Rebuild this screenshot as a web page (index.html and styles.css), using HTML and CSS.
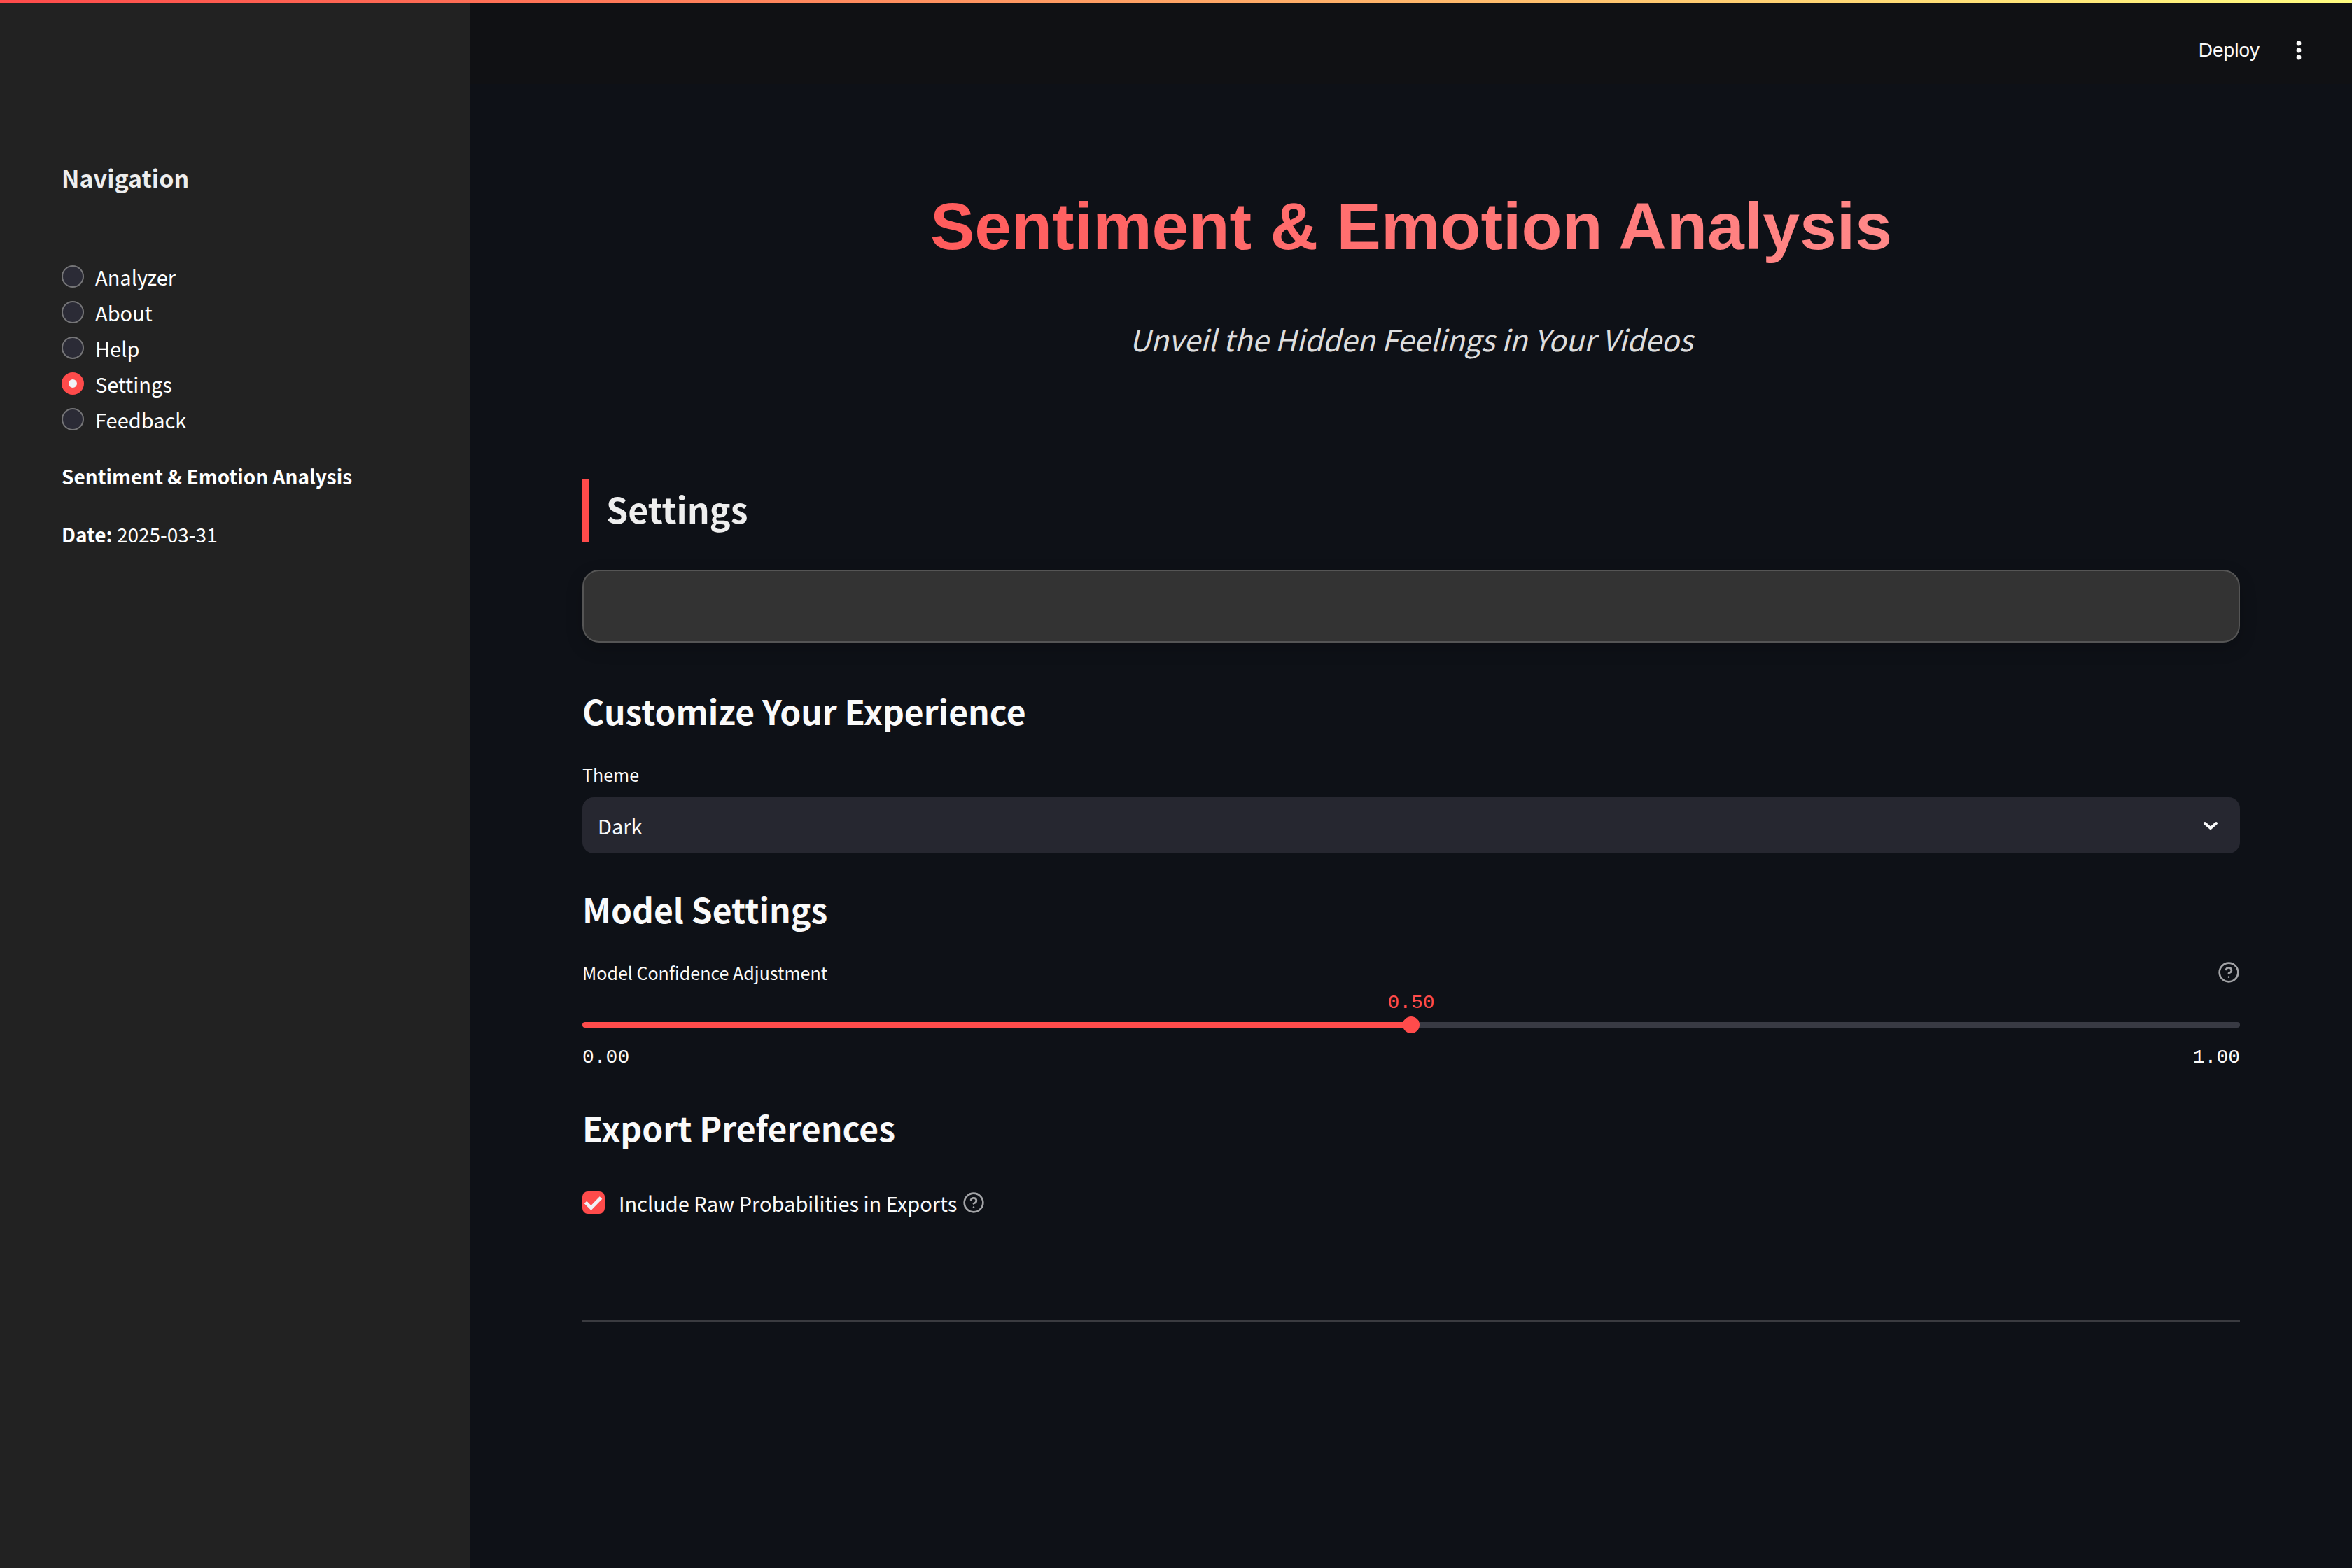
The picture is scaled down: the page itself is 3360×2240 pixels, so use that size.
FILE: index.html
```html
<!DOCTYPE html>
<html lang="en">
<head>
<meta charset="utf-8">
<title>Sentiment &amp; Emotion Analysis</title>
<link rel="stylesheet" href="styles.css">
</head>
<body>
<div class="accent-line"></div>
<div class="app">
  <aside class="sidebar">
    <h2 class="sidebar-title">Navigation</h2>
    <nav class="nav" aria-label="Navigation">
      <label class="nav-item"><input type="radio" name="page" class="radio">Analyzer</label>
      <label class="nav-item"><input type="radio" name="page" class="radio">About</label>
      <label class="nav-item"><input type="radio" name="page" class="radio">Help</label>
      <label class="nav-item"><input type="radio" name="page" class="radio" checked>Settings</label>
      <label class="nav-item"><input type="radio" name="page" class="radio">Feedback</label>
    </nav>
    <p class="sidebar-text"><strong>Sentiment &amp; Emotion Analysis</strong></p>
    <p class="sidebar-text"><strong>Date:</strong> 2025-03-31</p>
  </aside>
  <div class="page">
    <header class="toolbar">
      <button type="button" class="deploy">Deploy</button>
      <button type="button" class="menu" aria-label="Main menu">
        <svg class="menu-icon" viewBox="0 0 8 28"><circle cx="4" cy="4" r="3.4"/><circle cx="4" cy="14" r="3.4"/><circle cx="4" cy="24" r="3.4"/></svg>
      </button>
    </header>
    <main class="content">
      <h1 class="title">Sentiment &amp; Emotion Analysis</h1>
      <p class="subtitle">Unveil the Hidden Feelings in Your Videos</p>
      <h2 class="section-title">Settings</h2>
      <div class="card"></div>

      <h3 class="heading">Customize Your Experience</h3>
      <label class="field-label" for="theme">Theme</label>
      <div class="select-box">
        <select id="theme" class="select"><option>Dark</option><option>Light</option></select>
        <svg class="chevron" viewBox="0 0 32 32"><path d="M8 13l8 7 8-7"/></svg>
      </div>

      <h3 class="heading">Model Settings</h3>
      <div class="label-row">
        <label class="field-label" for="confidence">Model Confidence Adjustment</label>
        <button type="button" class="help" aria-label="Help for model confidence">
          <svg class="help-icon" viewBox="0 0 24 24"><circle cx="12" cy="12" r="10"/><path d="M9.09 9a3 3 0 0 1 5.83 1c0 2-3 3-3 3"/><path d="M12 17h.01"/></svg>
        </button>
      </div>
      <div class="slider">
        <output class="slider-value" for="confidence">0.50</output>
        <input type="range" id="confidence" class="range" min="0" max="1" step="0.01" value="0.5">
        <div class="ticks"><span>0.00</span><span>1.00</span></div>
      </div>

      <h3 class="heading">Export Preferences</h3>
      <div class="check-row">
        <label class="check-label">
          <span class="check-box">
            <input type="checkbox" class="check" checked>
            <svg class="check-mark" viewBox="0 0 32 32"><path d="M4.500 15.500l8 8L26.500 9"/></svg>
          </span>
          Include Raw Probabilities in Exports
        </label>
        <button type="button" class="help" aria-label="Help for raw probabilities">
          <svg class="help-icon" viewBox="0 0 24 24"><circle cx="12" cy="12" r="10"/><path d="M9.09 9a3 3 0 0 1 5.83 1c0 2-3 3-3 3"/><path d="M12 17h.01"/></svg>
        </button>
      </div>
      <hr class="rule">
    </main>
  </div>
</div>
</body>
</html>
```
FILE: styles.css
```css
* { box-sizing: border-box; }

body {
  margin: 0;
  background: #0e1117;
  color: #fafafa;
  font-family: "Noto Sans CJK JP", "Noto Sans", sans-serif;
  font-size: 29px;
  line-height: 48px;
}

h1, h2, h3, p { margin: 0; }
button { padding: 0; border: 0; background: none; color: inherit; }

.accent-line {
  position: absolute;
  inset: 0 0 auto 0;
  height: 4px;
  background: linear-gradient(90deg, #ff4b4b, #fffd80);
}

.app { display: flex; min-height: 100vh; }

/* Sidebar */
.sidebar {
  flex: none;
  width: 20%;
  padding: 226px 88px 0;
  background: #222;
  color: #fff;
}
.sidebar-title {
  margin-bottom: 89px;
  color: #eee;
  font-size: 34px;
  font-weight: 700;
  line-height: 56px;
}
.nav { display: flex; flex-direction: column; gap: 3px; margin-bottom: 33px; }
.nav-item { display: flex; align-items: center; gap: 16px; }
.radio {
  appearance: none;
  flex: none;
  width: 32px;
  height: 32px;
  margin: 0;
  border: 2px solid #767678;
  border-radius: 50%;
  background: #2b2b36;
}
.radio:checked { border: 10px solid #ff4b4b; background: #f0f2f6; }
.sidebar-text { margin-bottom: 35px; font-size: 28px; }

/* Main column */
.page { flex: 1; min-width: 0; }
.toolbar {
  display: flex;
  justify-content: flex-end;
  align-items: center;
  gap: 52px;
  height: 120px;
  padding: 24px 72px 0 0;
  background: #101114;
}
.deploy {
  font-family: "Liberation Sans", Arial, sans-serif;
  font-size: 28px;
  line-height: 48px;
}
.menu { display: flex; }
.menu-icon { width: 8px; height: 28px; fill: #fafafa; }

.content { display: flex; flex-direction: column; padding: 143px 160px 80px; }
.title {
  background: linear-gradient(90deg, #ff4b4b, #ff9999);
  background-clip: text;
  color: transparent;
  font-family: "Liberation Sans", Arial, sans-serif;
  font-size: 95px;
  line-height: 120px;
  text-align: center;
}
.subtitle {
  margin: 65px 0 164px;
  color: #ddd;
  font-size: 42px;
  font-style: italic;
  line-height: 72px;
  text-align: center;
}
.section-title {
  padding: 0 0 6px 24px;
  border-left: 10px solid #ff4b4b;
  color: #eee;
  font-size: 50px;
  line-height: 84px;
}
.card {
  height: 104px;
  margin: 40px 0 61px;
  border: 2px solid #555;
  border-radius: 24px;
  background: #333;
  box-shadow: 0 8px 24px rgba(0, 0, 0, .2);
}
.heading { font-size: 48px; font-weight: 700; line-height: 72px; }
.field-label { font-size: 25px; line-height: 40px; }

.select-box { display: grid; align-items: center; }
.select-box > * { grid-area: 1 / 1; }
.select {
  appearance: none;
  width: 100%;
  height: 80px;
  padding: 0 22px;
  border: 0;
  border-radius: 16px;
  background: #262730;
  color: #fafafa;
  font: inherit;
}
.chevron {
  justify-self: end;
  width: 32px;
  height: 32px;
  margin-right: 26px;
  fill: none;
  stroke: #fafafa;
  stroke-width: 4;
  stroke-linecap: round;
  stroke-linejoin: round;
  pointer-events: none;
}

.label-row { display: flex; justify-content: space-between; align-items: center; }
.help { display: flex; }
.help-icon {
  width: 32px;
  height: 32px;
  fill: none;
  stroke: #a3a4a7;
  stroke-width: 2;
  stroke-linecap: round;
  stroke-linejoin: round;
}

.slider {
  display: flex;
  flex-direction: column;
  margin-top: 5px;
  font-family: "Liberation Mono", "Courier New", monospace;
  font-size: 28px;
  line-height: 40px;
}
.slider-value { color: #ff4b4b; line-height: 38px; text-align: center; }
.range {
  appearance: none;
  width: 100%;
  height: 24px;
  margin: 0 0 15px;
  background: none;
}
.range::-webkit-slider-runnable-track {
  height: 8px;
  border-radius: 4px;
  background: linear-gradient(90deg, #ff4b4b 50%, #383a43 50%);
}
.range::-webkit-slider-thumb {
  appearance: none;
  width: 24px;
  height: 24px;
  margin-top: -8px;
  border-radius: 50%;
  background: #ff4b4b;
}
.ticks { display: flex; justify-content: space-between; }

.check-row { display: flex; align-items: center; gap: 8px; }
.check-label { display: flex; align-items: center; gap: 20px; }
.check-box { display: grid; }
.check-box > * { grid-area: 1 / 1; width: 32px; height: 32px; }
.check {
  appearance: none;
  margin: 0;
  border: 2px solid #767678;
  border-radius: 8px;
}
.check:checked { border: 0; background: #ff4b4b; }
.check-mark { fill: none; stroke: #f0f2f6; stroke-width: 5; pointer-events: none; }

.rule {
  width: 100%;
  height: 2px;
  margin: 144px 0 0;
  border: 0;
  background: #3a3b40;
}

/* Vertical rhythm between the form groups */
.heading + .field-label { margin: 35px 0 13px; }
.select-box + .heading { margin-top: 43px; }
.heading + .label-row { margin-top: 35px; }
.slider + .heading { margin-top: 43px; }
.heading + .check-row { margin-top: 48px; }
```
